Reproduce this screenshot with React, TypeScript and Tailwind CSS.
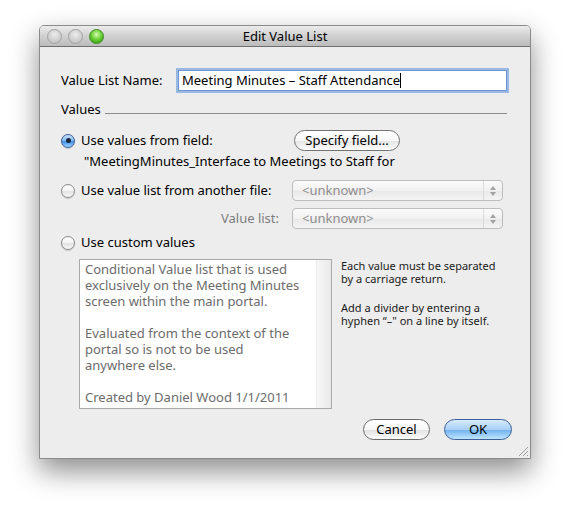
import React from 'react';

const font = { fontFamily: '"Noto Sans", "Open Sans", "DejaVu Sans", sans-serif' };

const Radio: React.FC<{ checked?: boolean }> = ({ checked }) => (
  <div
    className={`w-[14px] h-[14px] rounded-full flex items-center justify-center shrink-0 shadow-[0_1px_1px_rgba(0,0,0,0.15)] ${
      checked
        ? 'border border-[#3a5c98] bg-[linear-gradient(#c9e2fa,#7db8ef_50%,#3f8ee3_55%,#9ed6ff)]'
        : 'border border-[#8a8a8a] bg-[linear-gradient(#ffffff,#f2f2f2_50%,#e2e2e2_55%,#fafafa)]'
    }`}
  >
    {checked && <div className="w-[5px] h-[5px] rounded-full bg-[#1b2638]" />}
  </div>
);

const Popup: React.FC = () => (
  <div className="w-[211px] h-[21px] rounded-[4px] border border-[#bdbdbd] bg-[linear-gradient(#fbfbfb,#f1f1f1_50%,#e9e9e9_55%,#f4f4f4)] flex items-center">
    <span className="flex-1 pl-[9px] text-[13px] text-[#8e8e8e] leading-none">&lt;unknown&gt;</span>
    <div className="w-[19px] h-full border-l border-[#dadada] flex flex-col items-center justify-center gap-[2px]">
      <svg width="6" height="4" viewBox="0 0 6 4"><path d="M3 0L6 4H0Z" fill="#a2a2a2" /></svg>
      <svg width="6" height="4" viewBox="0 0 6 4"><path d="M0 0H6L3 4Z" fill="#a2a2a2" /></svg>
    </div>
  </div>
);

const Light: React.FC<{ green?: boolean }> = ({ green }) => (
  <div
    className={`w-[15px] h-[15px] rounded-full ${
      green
        ? 'border border-[#3f8a22] bg-[radial-gradient(circle_at_50%_35%,#d6fbb5,#6fd23a_45%,#2f9a0c_90%)]'
        : 'border border-[#a3a3a3] bg-[radial-gradient(circle_at_50%_35%,#ececec,#d3d3d3_50%,#bdbdbd_90%)]'
    }`}
  />
);

export default function App() {
  return (
    <div className="w-[571px] h-[514px] bg-white pt-[25px] pl-[39px]" style={font}>
      <div className="relative w-[492px] h-[434px] rounded-t-[5px] border border-[#8b8b8b] bg-[#ededed] shadow-[0_12px_28px_rgba(0,0,0,0.45)] flex flex-col">
        {/* title bar */}
        <div className="h-[21px] rounded-t-[4px] border-b border-[#6f6f6f] bg-[linear-gradient(#ececec,#d0d0d0_50%,#bcbcbc)] grid grid-cols-[1fr_auto_1fr] items-center">
          <div className="flex items-center gap-[6px] pl-[7px]">
            <Light />
            <Light />
            <Light green />
          </div>
          <span className="text-[13px] text-black leading-none">Edit Value List</span>
          <div />
        </div>

        {/* body */}
        <div className="flex-1 flex flex-col pl-[21px] text-[13px] text-black">
          <div className="mt-[21px] h-[25px] flex items-center">
            <span className="w-[115px]">Value List Name:</span>
            <div className="ml-[2px] w-[329px] h-[21px] bg-white border border-[#6c97d2] shadow-[0_0_0_2px_rgba(124,165,222,0.75)] flex items-center pl-[3px]">
              <span>Meeting Minutes – Staff Attendance</span>
              <span className="w-px h-[15px] bg-black" />
            </div>
          </div>

          <div className="mt-[7px] h-[20px] w-[446px] flex items-center gap-[4px]">
            <span>Values</span>
            <div className="flex-1 h-px bg-[#8d8d8d] mt-[7px]" />
          </div>

          <div className="mt-[10px] h-[21px] flex items-center">
            <div className="w-[233px] flex items-center gap-[6px]">
              <Radio checked />
              <span>Use values from field:</span>
            </div>
            <div className="w-[106px] h-[21px] rounded-full border border-[#737373] bg-[linear-gradient(#ffffff,#f7f7f7_50%,#e6e6e6_55%,#fdfdfd)] flex items-center justify-center">
              Specify field...
            </div>
          </div>

          <div className="mt-[4px] h-[14px] pl-[23px] flex items-center">
            <span>"MeetingMinutes_Interface to Meetings to Staff for</span>
          </div>

          <div className="mt-[11px] h-[21px] flex items-center">
            <div className="w-[231px] flex items-center gap-[6px]">
              <Radio />
              <span>Use value list from another file:</span>
            </div>
            <Popup />
          </div>

          <div className="mt-[7px] h-[21px] flex items-center">
            <span className="w-[231px] pr-[13px] text-right text-[#7d7d7d]">Value list:</span>
            <Popup />
          </div>

          <div className="mt-[7px] h-[14px] flex items-center gap-[6px]">
            <Radio />
            <span>Use custom values</span>
          </div>

          <div className="mt-[9px] flex items-start">
            <div className="ml-[18px] w-[253px] h-[150px] bg-white border border-[#a9a9a9] flex">
              <div className="flex-1 pl-[5px] pt-[1px] text-[#6c6c6c] leading-[16px]">
                <div>Conditional Value list that is used</div>
                <div>exclusively on the Meeting Minutes</div>
                <div>screen within the main portal.</div>
                <div className="h-[16px]" />
                <div>Evaluated from the context of the</div>
                <div>portal so is not to be used</div>
                <div>anywhere else.</div>
                <div className="h-[16px]" />
                <div>Created by Daniel Wood 1/1/2011</div>
              </div>
              <div className="w-[15px] h-full border-l border-[#ececec] bg-[linear-gradient(90deg,#f6f6f6,#e9e9e9)]" />
            </div>
            <div className="ml-[9px] text-[11px] leading-[13px] text-[#1a1a1a]">
              <div>Each value must be separated</div>
              <div>by a carriage return.</div>
              <div className="h-[16px]" />
              <div>Add a divider by entering a</div>
              <div>hyphen “–" on a line by itself.</div>
            </div>
          </div>

          <div className="mt-[10px] h-[21px] flex justify-end pr-[18px] gap-[14px]">
            <div className="w-[67px] h-[21px] rounded-full border border-[#6a6a6a] bg-[linear-gradient(#ffffff,#f6f6f6_50%,#e3e3e3_55%,#fdfdfd)] flex items-center justify-center">
              Cancel
            </div>
            <div className="w-[68px] h-[21px] rounded-full border border-[#3c5e9c] bg-[linear-gradient(#d7ebfc,#a8d0f6_50%,#74b5f0_55%,#bfe5ff)] flex items-center justify-center">
              OK
            </div>
          </div>
        </div>

        <svg className="absolute right-[1px] bottom-[1px]" width="12" height="12" viewBox="0 0 12 12">
          <path d="M11 2L2 11M11 6L6 11M11 10L10 11" stroke="#9a9a9a" strokeWidth="1" />
        </svg>
      </div>
    </div>
  );
}
